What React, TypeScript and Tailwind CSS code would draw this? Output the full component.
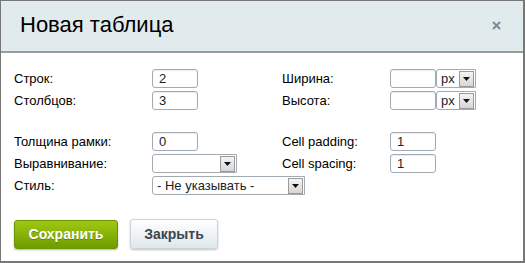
import React from 'react';

const font = "font-['Liberation_Sans',Arial,sans-serif]";

function TextInput({ value = '', w = 'w-[46px]' }: { value?: string; w?: string }) {
  return (
    <div className={`${w} h-[19px] rounded-[3px] border border-[#a3abb2] bg-white pl-[6px] text-[13px] leading-[17px] text-[#222] shadow-[inset_0_1px_1px_rgba(0,0,0,0.08)]`}>
      {value}
    </div>
  );
}

function Arrow() {
  return (
    <div className="flex h-[16px] w-[15px] items-center justify-center border border-[#9a9a9a] bg-gradient-to-b from-[#f4f4f4] to-[#d6d6d6]">
      <svg width="7" height="4" viewBox="0 0 7 4">
        <path d="M0 0h7L3.5 4z" fill="#111" />
      </svg>
    </div>
  );
}

function Select({ text = '', w }: { text?: string; w: string }) {
  return (
    <div className={`${w} flex h-[19px] items-center justify-between rounded-l-[3px] border border-[#a3abb2] bg-white pl-[4px] pr-[1px] text-[13px] text-[#222]`}>
      <span className="leading-none">{text}</span>
      <Arrow />
    </div>
  );
}

function Label({ children }: { children: React.ReactNode }) {
  return <div className="flex h-[19px] items-center text-[13px] text-black">{children}</div>;
}

export default function App() {
  return (
    <div className={`${font} w-[525px] h-[263px] border-t border-l border-r-2 border-b-2 border-[#777] bg-white flex flex-col`}>
      {/* Header */}
      <div className="h-[52px] shrink-0 bg-[#e1eaed] border-b-2 border-[#9b9b9b] flex items-center justify-between pl-[19px] pr-[22px]">
        <h1 className="text-[22px] text-black leading-none mt-[-2px]">Новая таблица</h1>
        <svg width="9" height="9" viewBox="0 0 9 9" className="mt-[-1px]">
          <path d="M1 1l7 7M8 1l-7 7" stroke="#7d8b9a" strokeWidth="2" />
        </svg>
      </div>

      {/* Body */}
      <div className="flex flex-col pl-[13px] pt-[16px]">
        <div className="grid grid-cols-[138px_130px_108px_1fr] gap-y-[3px]">
          <Label>Строк:</Label>
          <TextInput value="2" />
          <Label>Ширина:</Label>
          <div className="flex">
            <TextInput />
            <Select text="px" w="w-[40px]" />
          </div>

          <Label>Столбцов:</Label>
          <TextInput value="3" />
          <Label>Высота:</Label>
          <div className="flex">
            <TextInput />
            <Select text="px" w="w-[40px]" />
          </div>
        </div>

        <div className="mt-[22px] grid grid-cols-[138px_130px_108px_1fr] gap-y-[3px]">
          <Label>Толщина рамки:</Label>
          <TextInput value="0" />
          <Label>Cell padding:</Label>
          <TextInput value="1" />

          <Label>Выравнивание:</Label>
          <Select w="w-[85px]" />
          <Label>Cell spacing:</Label>
          <TextInput value="1" />

          <Label>Стиль:</Label>
          <div className="col-span-3">
            <Select text="- Не указывать -" w="w-[153px]" />
          </div>
        </div>

        {/* Buttons */}
        <div className="mt-[25px] flex gap-[12px]">
          <button className="h-[29px] w-[104px] rounded-[3px] border border-[#6c9400] bg-gradient-to-b from-[#a0c812] to-[#6e9c00] text-[14px] font-bold text-white [text-shadow:0_1px_0_rgba(0,0,0,0.25)] shadow-[0_1px_2px_rgba(0,0,0,0.3)]">
            Сохранить
          </button>
          <button className="h-[30px] w-[88px] rounded-[3px] border border-[#cdd5d9] bg-gradient-to-b from-[#ffffff] to-[#dfe7ea] text-[14px] font-bold text-[#3c4650] shadow-[0_1px_2px_rgba(0,0,0,0.25)] mt-[-1px]">
            Закрыть
          </button>
        </div>
      </div>
    </div>
  );
}
